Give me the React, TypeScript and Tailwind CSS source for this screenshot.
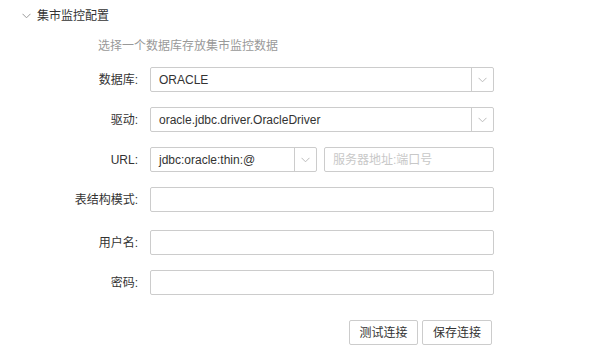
import React from 'react';

const font = { fontFamily: '"Liberation Sans", "Noto Sans CJK SC", sans-serif' };

function Chevron({ className }: { className?: string }) {
  return (
    <svg width="9" height="6" viewBox="0 0 9 6" className={className}>
      <path d="M0.5 0.8 L4.5 4.8 L8.5 0.8" fill="none" stroke="currentColor" strokeWidth="1" />
    </svg>
  );
}

function Label({ text }: { text: string }) {
  return <div className="w-[138px] text-right text-[12px] text-[#333]">{text}</div>;
}

function Select({ value, width }: { value: string; width: string }) {
  return (
    <div className={`flex h-[25px] ${width} border border-[#ccc] rounded-[2px] bg-white`}>
      <div className="flex-1 flex items-center pl-2 text-[12px] text-[#333] truncate">{value}</div>
      <div className="w-[22px] border-l border-[#ccc] flex items-center justify-center text-[#bbb]">
        <Chevron />
      </div>
    </div>
  );
}

function Input({ placeholder, width }: { placeholder?: string; width: string }) {
  return (
    <div className={`flex items-center h-[25px] ${width} border border-[#ccc] rounded-[2px] bg-white pl-2 text-[12px] text-[#c8c8c8]`}>
      {placeholder}
    </div>
  );
}

export default function App() {
  return (
    <div className="w-[613px] h-[357px] bg-white relative" style={font}>
      <div className="flex items-center h-[32px] pl-[22px]">
        <Chevron className="text-[#999] mr-[6px]" />
        <span className="text-[12px] text-[#333]">集市监控配置</span>
      </div>
      <div className="pl-[98px] text-[12px] text-[#999] leading-[28px]">选择一个数据库存放集市监控数据</div>

      <div className="flex flex-col gap-[15px] mt-[7px]">
        <div className="flex items-center gap-[12px]">
          <Label text="数据库:" />
          <Select value="ORACLE" width="w-[344px]" />
        </div>
        <div className="flex items-center gap-[12px]">
          <Label text="驱动:" />
          <Select value="oracle.jdbc.driver.OracleDriver" width="w-[344px]" />
        </div>
        <div className="flex items-center gap-[12px]">
          <Label text="URL:" />
          <div className="flex gap-[7px]">
            <Select value="jdbc:oracle:thin:@" width="w-[167px]" />
            <Input placeholder="服务器地址:端口号" width="w-[170px]" />
          </div>
        </div>
        <div className="flex items-center gap-[12px]">
          <Label text="表结构模式:" />
          <Input width="w-[344px]" />
        </div>
        <div className="flex items-center gap-[12px] mt-[3px]">
          <Label text="用户名:" />
          <Input width="w-[344px]" />
        </div>
        <div className="flex items-center gap-[12px]">
          <Label text="密码:" />
          <Input width="w-[344px]" />
        </div>
      </div>

      <div className="flex gap-[4px] pl-[349px] mt-[25px]">
        <button className="w-[69px] h-[25px] border border-[#ccc] rounded-[2px] bg-white text-[12px] text-[#333]">测试连接</button>
        <button className="w-[70px] h-[25px] border border-[#ccc] rounded-[2px] bg-white text-[12px] text-[#333]">保存连接</button>
      </div>
    </div>
  );
}
